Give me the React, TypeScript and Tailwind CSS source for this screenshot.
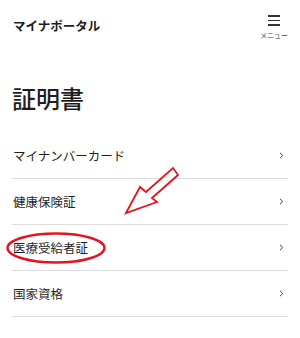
import React from "react";

const items = ["マイナンバーカード", "健康保険証", "医療受給者証", "国家資格"];

function Chevron() {
  return (
    <svg width="5" height="7" viewBox="0 0 5 7" fill="none">
      <path d="M1 0.8 L3.8 3.5 L1 6.2" stroke="#444" strokeWidth="1" />
    </svg>
  );
}

export default function App() {
  return (
    <div
      className="relative w-[300px] h-[338px] bg-white overflow-hidden text-[#1e1e1e]"
      style={{ fontFamily: '"Noto Sans CJK JP", "Noto Sans", sans-serif' }}
    >
      <header className="flex items-start justify-between h-[52px] pl-[13px] pr-[13px]">
        <div className="mt-[17px] text-[12.5px] leading-[18px] font-bold">マイナポータル</div>
        <div className="flex flex-col items-center mt-[15px] mr-[-1px]">
          <div className="flex flex-col gap-[3px] w-[12px]">
            <div className="h-[1.5px] bg-[#333]" />
            <div className="h-[1.5px] bg-[#333]" />
            <div className="h-[1.5px] bg-[#333]" />
          </div>
          <div className="text-[7px] leading-[9px] mt-[5px] text-[#444]">メニュー</div>
        </div>
      </header>
      <div className="h-[81px] pl-[12px] pt-[31px]">
        <h1 className="text-[24px] leading-[30px] font-medium">証明書</h1>
      </div>
      <ul className="mx-[12px]">
        {items.map((t) => (
          <li
            key={t}
            className="flex items-center justify-between h-[46px] border-b border-[#dcdcdc] pl-px pr-[4px]"
          >
            <span className="text-[12.5px] leading-[18px]">{t}</span>
            <Chevron />
          </li>
        ))}
      </ul>
      <svg
        className="absolute left-0 top-0 pointer-events-none"
        width="300"
        height="338"
        viewBox="0 0 300 338"
      >
        <ellipse cx="56" cy="248" rx="48.5" ry="14.5" fill="none" stroke="#e3141f" strokeWidth="2.4" />
        <polygon
          points="126,213 140,187 146,192 173,168 178,175 152,198 157,202"
          fill="white"
          stroke="#e3141f"
          strokeWidth="1.8"
          strokeLinejoin="miter"
        />
      </svg>
    </div>
  );
}
